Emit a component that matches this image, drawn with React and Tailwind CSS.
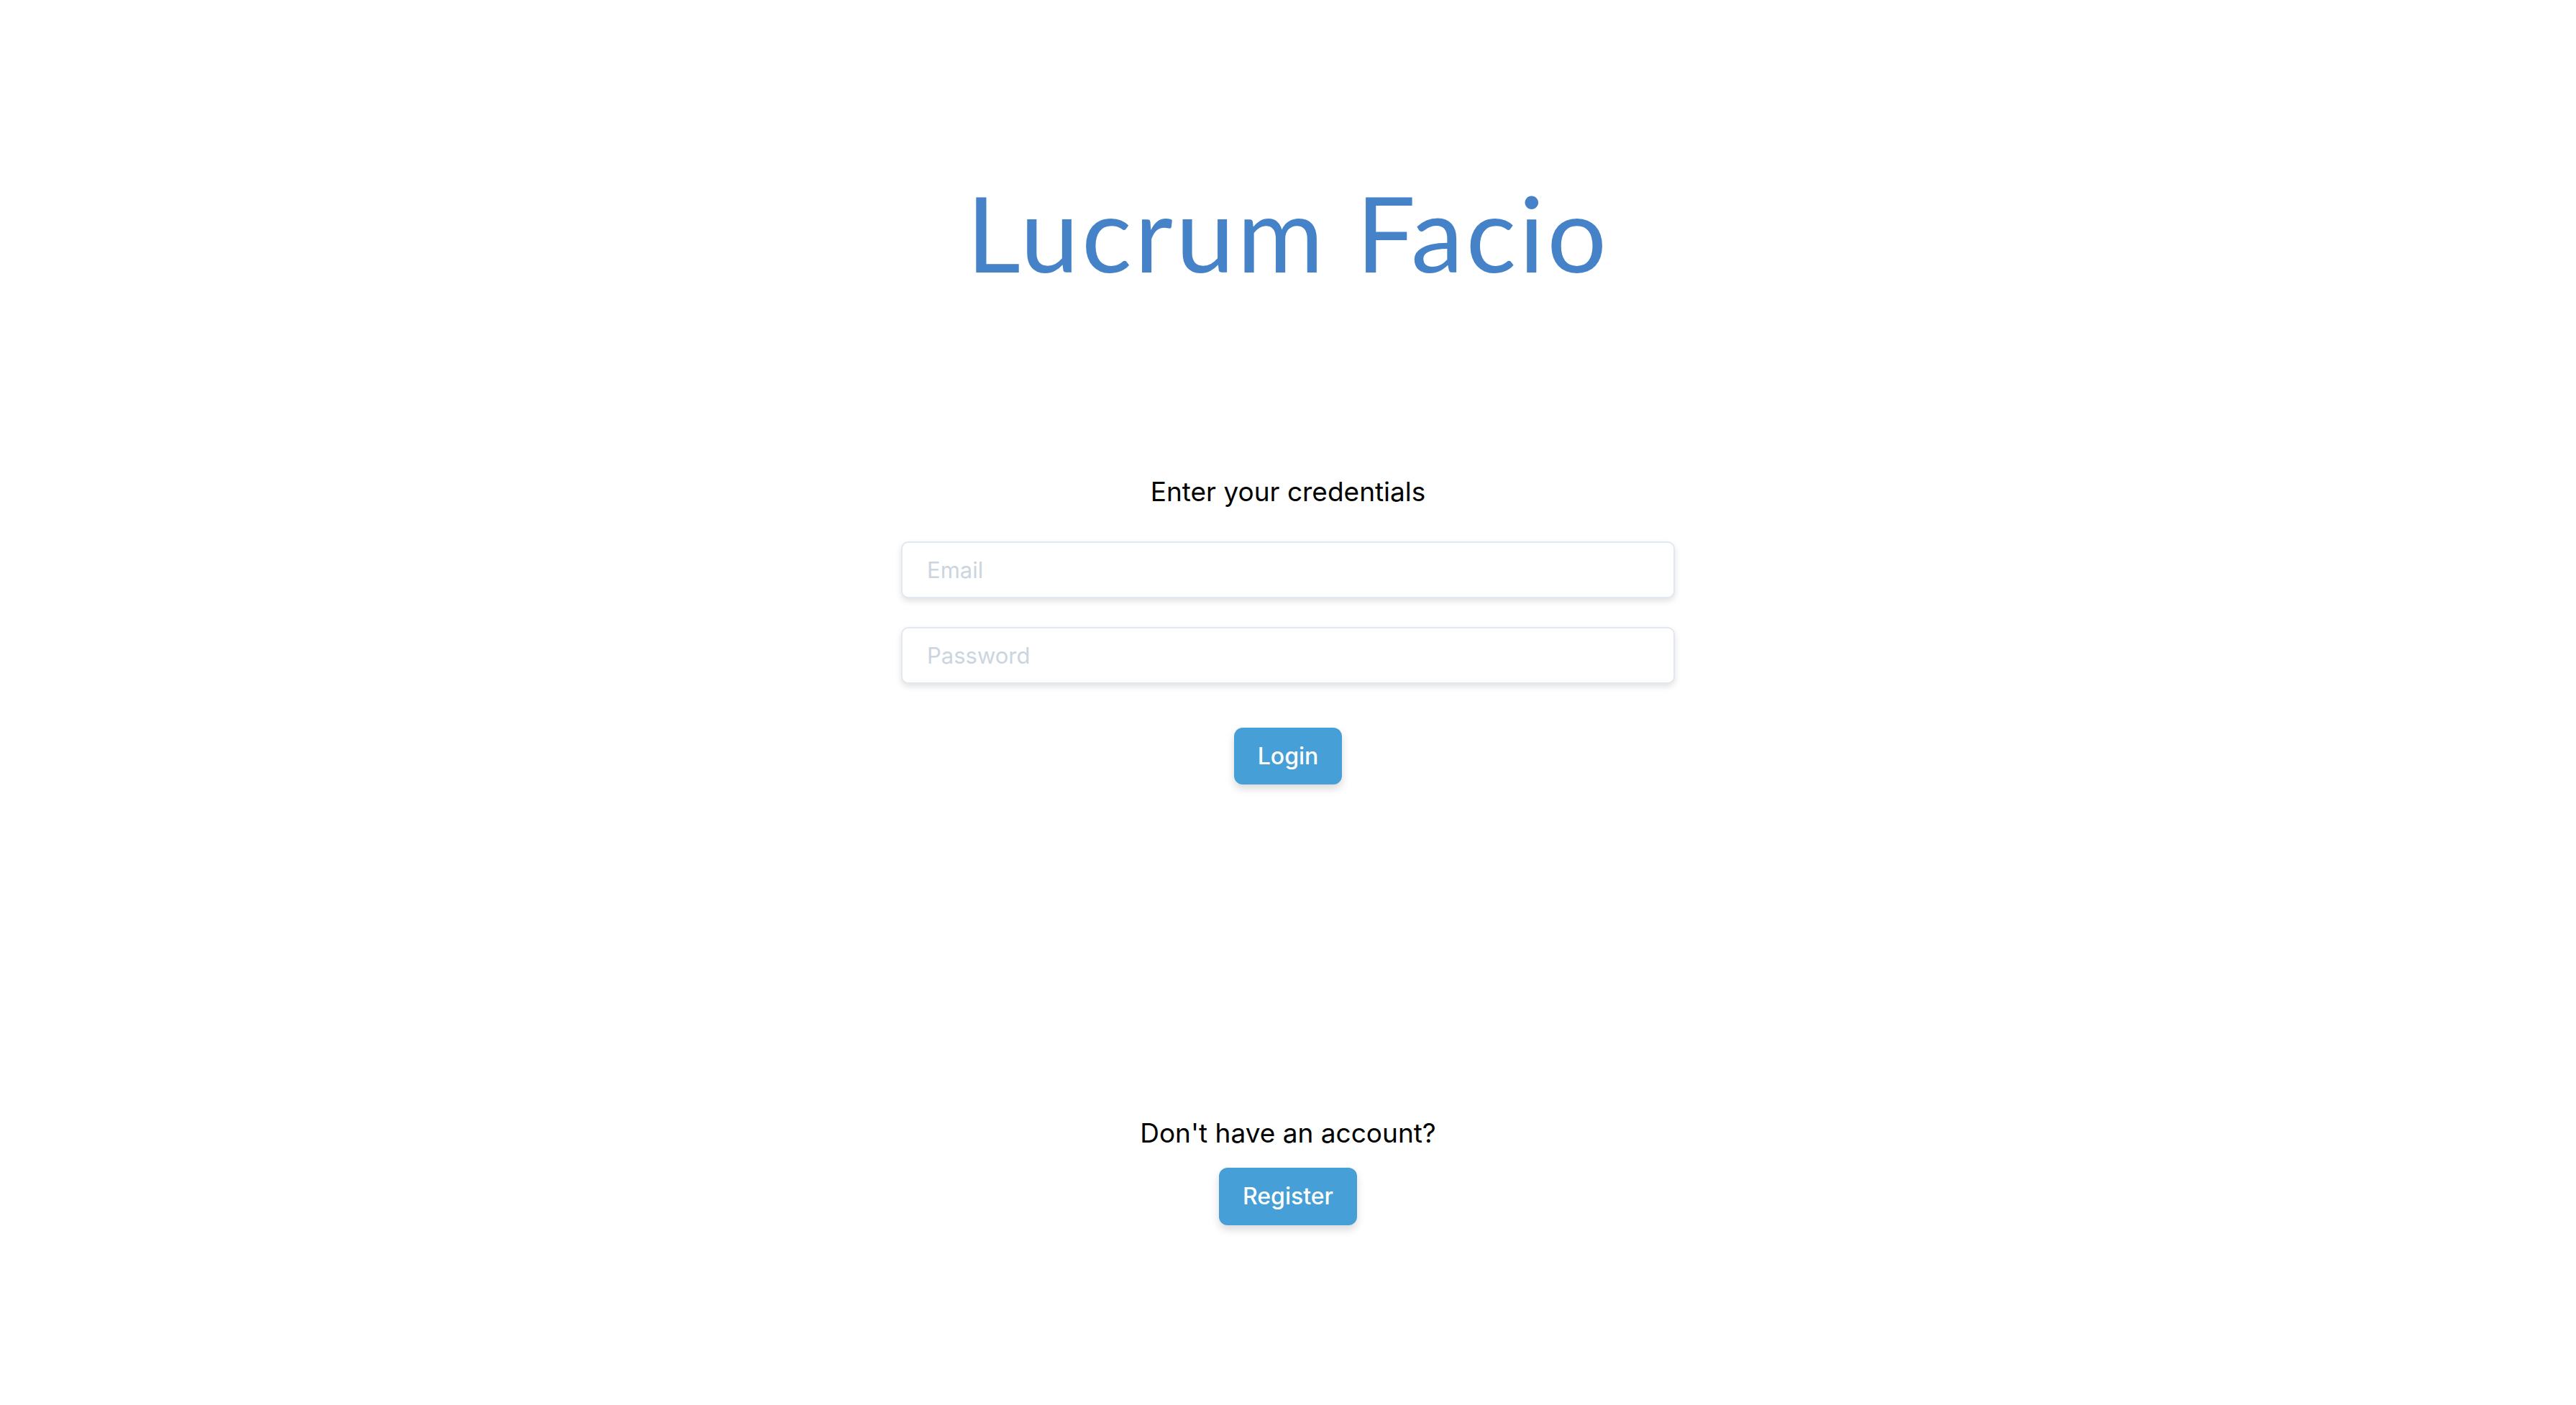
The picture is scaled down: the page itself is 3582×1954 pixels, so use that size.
export default function App() {
  return (
    <div className="min-h-screen w-full bg-white flex flex-col items-center">
      <h1
        className="mt-[250px] text-[146px] leading-none font-normal tracking-[4px] text-[#4682c8]"
        style={{ fontFamily: "Lato, 'Open Sans', sans-serif" }}
      >
        Lucrum Facio
      </h1>
      <div
        className="flex flex-col items-center"
        style={{ fontFamily: "Inter, 'Liberation Sans', sans-serif" }}
      >
        <p className="mt-[264px] text-[37px] leading-[48px] text-black">Enter your credentials</p>
        <input
          type="email"
          placeholder="Email"
          className="mt-[45px] w-[1076px] h-[79px] px-[34px] text-[31px] rounded-[10px] border-2 border-[#e2e8f0] bg-white shadow-[0_4px_8px_rgba(0,0,0,0.12)] placeholder:text-[#cbd5e0] outline-none"
        />
        <input
          type="password"
          placeholder="Password"
          className="mt-[40px] w-[1076px] h-[79px] px-[34px] text-[31px] rounded-[10px] border-2 border-[#e2e8f0] bg-white shadow-[0_4px_8px_rgba(0,0,0,0.12)] placeholder:text-[#cbd5e0] outline-none"
        />
        <button className="mt-[61px] h-[79px] px-[33px] rounded-[12px] bg-[#469fd6] text-white text-[32px] font-medium shadow-[0_6px_12px_rgba(0,0,0,0.15)]">
          Login
        </button>
        <p className="mt-[461px] text-[37px] leading-[48px] text-black">Don't have an account?</p>
        <button className="mt-[24px] h-[80px] px-[33px] rounded-[12px] bg-[#469fd6] text-white text-[32px] font-medium shadow-[0_6px_12px_rgba(0,0,0,0.15)]">
          Register
        </button>
      </div>
    </div>
  );
}
